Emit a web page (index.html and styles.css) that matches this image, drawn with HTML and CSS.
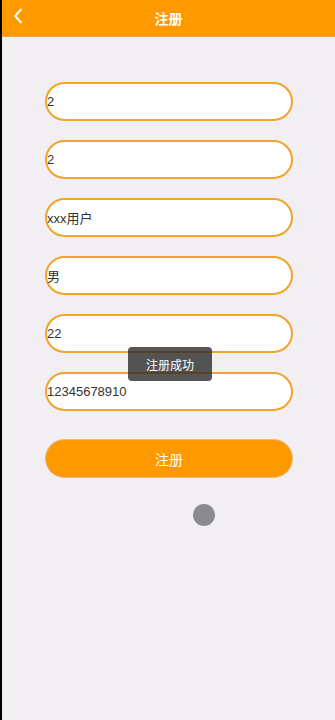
FILE: index.html
```html
<!DOCTYPE html>
<html>
<head>
<meta charset="utf-8">
<link rel="stylesheet" href="styles.css">
</head>
<body>
<div class="app">
  <header class="bar">
    <svg class="back" width="12" height="18" viewBox="0 0 12 18"><path d="M9.5 2 L3 9 L9.5 16" fill="none" stroke="#fff" stroke-width="2"/></svg>
    <div class="title">注册</div>
  </header>
  <main class="form">
    <div class="field">2</div>
    <div class="field">2</div>
    <div class="field">xxx用户</div>
    <div class="field">男</div>
    <div class="field">22</div>
    <div class="field">12345678910</div>
    <div class="btn">注册</div>
  </main>
  <div class="toast">注册成功</div>
  <div class="dot"></div>
</div>
</body>
</html>
```
FILE: styles.css
```css
html, body {
  margin: 0;
  padding: 0;
  height: 100%;
}
body {
  background: #000;
  font-family: "Liberation Sans", "Noto Sans CJK SC", sans-serif;
}
.app {
  position: relative;
  margin-left: 2px;
  min-height: 720px;
  background: #f1eff1;
}
.bar {
  position: relative;
  height: 36px;
  background: #ff9900;
  border-bottom: 1px solid #e0a55a;
  display: flex;
  align-items: center;
  justify-content: center;
}
.back {
  position: absolute;
  left: 10px;
  top: 7px;
}
.title {
  color: #fff;
  font-weight: bold;
  font-size: 14px;
  font-family: "Noto Sans CJK SC", sans-serif;
}
.form {
  display: flex;
  flex-direction: column;
  padding: 45px 40px 0 43px;
  gap: 19px;
}
.field {
  box-sizing: border-box;
  height: 39px;
  width: 248px;
  background: #fff;
  border: 2px solid #f2a32c;
  border-radius: 20px;
  display: flex;
  align-items: center;
  padding-left: 0;
  font-size: 13px;
  color: #333;
  font-family: "Liberation Sans", "Noto Sans CJK SC", sans-serif;
}
.btn {
  box-sizing: border-box;
  margin-top: 9px;
  height: 39px;
  width: 248px;
  background: #ff9900;
  border: 1px solid #e3b98a;
  border-radius: 20px;
  color: #fff;
  font-size: 14px;
  display: flex;
  align-items: center;
  justify-content: center;
  font-family: "Noto Sans CJK SC", sans-serif;
}
.toast {
  position: absolute;
  left: 126px;
  top: 347px;
  width: 84px;
  height: 34px;
  background: rgba(40, 38, 40, 0.78);
  border-radius: 4px;
  color: #fff;
  font-size: 12px;
  display: flex;
  align-items: center;
  justify-content: center;
  font-family: "Noto Sans CJK SC", sans-serif;
}
.dot {
  position: absolute;
  left: 191px;
  top: 504px;
  width: 22px;
  height: 22px;
  border-radius: 50%;
  background: #8b8a8c;
}
```
